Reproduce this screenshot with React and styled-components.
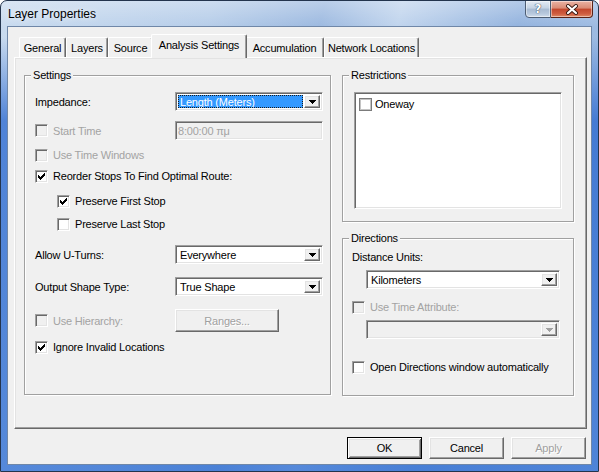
import React from "react";
import styled, { createGlobalStyle, css } from "styled-components";

const GlobalStyle = createGlobalStyle`
  html, body { margin: 0; padding: 0; background: #fff; }
  body {
    font-family: "Liberation Sans", Arial, sans-serif;
    font-size: 11px;
    letter-spacing: -0.2px;
    color: #000;
  }
  * { box-sizing: border-box; }
`;

// classic 3D borders
const sunken = css`
  border: 1px solid;
  border-color: #a0a0a0 #fff #fff #a0a0a0;
  box-shadow: inset 1px 1px 0 #696969, inset -1px -1px 0 #e3e3e3;
`;
const raised = css`
  border: 1px solid;
  border-color: #fff #696969 #696969 #fff;
  box-shadow: inset -1px -1px 0 #a0a0a0, inset 1px 1px 0 #e3e3e3;
`;

const Window = styled.div`
  width: 599px;
  height: 472px;
  display: flex;
  flex-direction: column;
  border: 1px solid #23344d;
  border-radius: 7px 7px 0 0;
  overflow: hidden;
  background:
    linear-gradient(180deg, rgba(255,255,255,0.3) 0, rgba(255,255,255,0) 26px, rgba(30,90,200,0) 36px, rgba(30,95,205,0.7) 120px, rgba(40,105,210,0.7) 100%),
    linear-gradient(103deg, #c9dbef 0%, #b6cde9 30%, #9cb9e0 46%, #c0d4ed 57%, #93b3de 74%, #aac4e6 100%);
`;

const TitleBar = styled.div`
  height: 26px;
  display: flex;
  align-items: flex-start;
  padding: 0 5px 0 7px;
`;

const Title = styled.div`
  flex: 1;
  font-size: 12px;
  letter-spacing: 0;
  line-height: 26px;
  color: #000;
  text-shadow: 0 0 6px rgba(255,255,255,0.9);
`;

const CaptionButton = styled.div`
  width: ${p => p.$w}px;
  height: 18px;
  margin-top: -1px;
  display: flex;
  align-items: center;
  justify-content: center;
  border: 1px solid ${p => (p.$close ? "#5a2216" : "#4d5d73")};
  border-left: ${p => (p.$close ? "none" : undefined)};
  border-radius: ${p => (p.$close ? "0 0 4px 0" : "0 0 0 4px")};
  background: ${p =>
    p.$close
      ? "linear-gradient(180deg, #eab3a5 0%, #d98a74 45%, #c2462c 50%, #cf5d40 80%, #e08a66 100%)"
      : "linear-gradient(180deg, #e4ebf4 0%, #c4d2e3 45%, #a7bad2 50%, #b8c9de 80%, #d2deec 100%)"};
  box-shadow: inset 0 0 0 1px rgba(255,255,255,0.45);
  color: #fff;
  font-family: "DejaVu Sans", sans-serif;
  font-weight: bold;
  font-size: 12px;
  letter-spacing: 0;
  text-shadow: 0 0 1px #2b3a52, 0 0 1px #2b3a52;
`;

const Client = styled.div`
  flex: 1;
  margin: 0 7px 7px;
  background: #f0f0f0;
  display: flex;
  flex-direction: column;
  padding: 7px 4px 5px 6px;
  box-shadow: 0 0 0 1px #6f87a8;
`;

const TabStrip = styled.div`
  height: 23px;
  display: flex;
  align-items: flex-end;
  padding-left: 5px;
  position: relative;
  z-index: 1;
`;

const Tab = styled.div`
  width: ${p => (p.$active ? p.$w + 4 : p.$w)}px;
  height: ${p => (p.$active ? 24 : 20)}px;
  margin: ${p => (p.$active ? "0 -2px -1px -2px" : "0")};
  padding-bottom: ${p => (p.$active ? 4 : 0)}px;
  position: relative;
  z-index: ${p => (p.$active ? 2 : 1)};
  display: flex;
  align-items: center;
  justify-content: center;
  background: #f0f0f0;
  border-top: 1px solid #fff;
  border-left: 1px solid #fff;
  border-right: 1px solid #696969;
  border-radius: 2px 2px 0 0;
  box-shadow: inset -1px 0 0 #a0a0a0;
  white-space: nowrap;
`;

const TabPage = styled.div`
  height: 372px;
  ${raised};
  display: flex;
  align-items: flex-start;
  gap: 11px;
  padding: 17px 12px 0 9px;
`;

const Column = styled.div`
  display: flex;
  flex-direction: column;
  gap: 16px;
`;

const GroupBox = styled.div`
  position: relative;
  width: ${p => p.$w}px;
  height: ${p => p.$h}px;
  border: 1px solid #a0a0a0;
  box-shadow: inset 1px 1px 0 #fff, 1px 1px 0 #fff;
  padding: ${p => p.$pad};
  display: flex;
  flex-direction: column;
`;

const GroupTitle = styled.span`
  position: absolute;
  top: -7px;
  left: 6px;
  padding: 0 2px;
  line-height: 13px;
  background: #f0f0f0;
`;

const Row = styled.div`
  height: ${p => p.$h || 16}px;
  margin-top: ${p => p.$mt || 0}px;
  margin-left: ${p => p.$indent || 0}px;
  display: flex;
  align-items: center;
  flex-shrink: 0;
`;

const Label = styled.div`
  width: ${p => (p.$w ? `${p.$w}px` : "auto")};
  display: flex;
  align-items: center;
  gap: ${p => p.$gap ?? 5}px;
  color: ${p => (p.$disabled ? "#a3a3a3" : "#000")};
  white-space: nowrap;
`;

const Box = styled.span`
  width: 13px;
  height: 13px;
  flex-shrink: 0;
  display: inline-flex;
  align-items: center;
  justify-content: center;
  background: ${p => (p.$disabled ? "#f0f0f0" : "#fff")};
  color: #000;
  ${p =>
    p.$flat
      ? css`
          border: 1px solid #7b7b7b;
          box-shadow: inset 0 0 0 1px #c4c4c4;
        `
      : sunken};
`;

const CheckMark = () => (
  <svg width="7" height="7" viewBox="0 0 7 7" shapeRendering="crispEdges">
    {[2, 3, 4, 3, 2, 1, 0].map((t, i) => (
      <rect key={i} x={i} y={t} width="1" height="3" fill="currentColor" />
    ))}
  </svg>
);

const CheckBox = ({ checked, disabled, flat }) => (
  <Box $disabled={disabled} $flat={flat}>
    {checked && <CheckMark />}
  </Box>
);

const Combo = styled.div`
  width: ${p => p.$w}px;
  height: 19px;
  ${sunken};
  background: ${p => (p.$disabled ? "#f0f0f0" : "#fff")};
  display: flex;
  padding: 2px;
`;

const ComboText = styled.div`
  flex: 1;
  display: flex;
  align-items: center;
  padding-left: 2px;
  margin-right: 1px;
  white-space: nowrap;
  ${p =>
    p.$selected &&
    css`
      background: #3399ff;
      color: #fff;
      outline: 1px dotted #1c1c1c;
      outline-offset: -1px;
    `}
`;

const DropButton = styled.div`
  width: 16px;
  ${raised};
  background: #f0f0f0;
  display: flex;
  align-items: center;
  justify-content: center;
  color: ${p => (p.$disabled ? "#a0a0a0" : "#000")};
`;

const Arrow = () => (
  <svg width="7" height="4" viewBox="0 0 7 4" shapeRendering="crispEdges">
    <rect x="0" y="0" width="7" height="1" fill="currentColor" />
    <rect x="1" y="1" width="5" height="1" fill="currentColor" />
    <rect x="2" y="2" width="3" height="1" fill="currentColor" />
    <rect x="3" y="3" width="1" height="1" fill="currentColor" />
  </svg>
);

const ComboBox = ({ w, value, selected, disabled }) => (
  <Combo $w={w} $disabled={disabled}>
    <ComboText $selected={selected}>{value}</ComboText>
    <DropButton $disabled={disabled}>
      <Arrow />
    </DropButton>
  </Combo>
);

const TextBox = styled.div`
  width: ${p => p.$w}px;
  height: 19px;
  ${sunken};
  background: #f0f0f0;
  color: #a3a3a3;
  display: flex;
  align-items: center;
  padding-left: 2px;
`;

const PushButton = styled.div`
  width: ${p => p.$w || 75}px;
  height: ${p => p.$h || 22}px;
  display: flex;
  align-items: center;
  justify-content: center;
  background: #f0f0f0;
  color: ${p => (p.$disabled ? "#a0a0a0" : "#000")};
  text-shadow: ${p => (p.$disabled ? "1px 1px 0 #fff" : "none")};
  ${p =>
    p.$default
      ? css`
          border: 1px solid #000;
          box-shadow: inset 1px 1px 0 #fff, inset -1px -1px 0 #696969,
            inset 2px 2px 0 #e3e3e3, inset -2px -2px 0 #a0a0a0;
        `
      : raised};
`;

const ListBox = styled.div`
  width: 208px;
  height: 117px;
  ${sunken};
  background: #fff;
  padding: 3px 4px;
`;

const ListItem = styled.div`
  height: 16px;
  display: flex;
  align-items: center;
  gap: 3px;
`;

const ButtonRow = styled.div`
  margin-top: 8px;
  height: 22px;
  display: flex;
  justify-content: flex-end;
  gap: 7px;
  padding-right: 1px;
`;

const tabs = [
  ["General", 47],
  ["Layers", 42],
  ["Source", 45],
  ["Analysis Settings", 92],
  ["Accumulation", 79],
  ["Network Locations", 95],
];

const CloseGlyph = () => (
  <svg width="14" height="11" viewBox="0 0 14 11">
    <path d="M3 2 L11 9 M11 2 L3 9" stroke="#3b1b14" strokeWidth="4" strokeLinecap="round" />
    <path d="M3 2 L11 9 M11 2 L3 9" stroke="#fff" strokeWidth="2.2" strokeLinecap="round" />
  </svg>
);

export default function App() {
  return (
    <>
      <GlobalStyle />
      <Window>
        <TitleBar>
          <Title>Layer Properties</Title>
          <CaptionButton $w={26}>?</CaptionButton>
          <CaptionButton $w={42} $close>
            <CloseGlyph />
          </CaptionButton>
        </TitleBar>
        <Client>
          <TabStrip>
            {tabs.map(([name, w]) => (
              <Tab key={name} $w={w} $active={name === "Analysis Settings"}>
                {name}
              </Tab>
            ))}
          </TabStrip>
          <TabPage>
            <GroupBox $w={307} $h={320} $pad="16px 0 0 10px">
              <GroupTitle>Settings</GroupTitle>
              <Row $h={19}>
                <Label $w={140}>Impedance:</Label>
                <ComboBox w={148} value="Length (Meters)" selected />
              </Row>
              <Row $h={19} $mt={10}>
                <Label $w={140} $disabled>
                  <CheckBox disabled />
                  Start Time
                </Label>
                <TextBox $w={148}>8:00:00 πμ</TextBox>
              </Row>
              <Row $mt={7}>
                <Label $disabled>
                  <CheckBox disabled />
                  Use Time Windows
                </Label>
              </Row>
              <Row $mt={5}>
                <Label>
                  <CheckBox checked />
                  Reorder Stops To Find Optimal Route:
                </Label>
              </Row>
              <Row $mt={9} $indent={22}>
                <Label>
                  <CheckBox checked />
                  Preserve First Stop
                </Label>
              </Row>
              <Row $mt={7} $indent={22}>
                <Label>
                  <CheckBox />
                  Preserve Last Stop
                </Label>
              </Row>
              <Row $h={19} $mt={13}>
                <Label $w={140}>Allow U-Turns:</Label>
                <ComboBox w={148} value="Everywhere" />
              </Row>
              <Row $h={19} $mt={13}>
                <Label $w={140}>Output Shape Type:</Label>
                <ComboBox w={148} value="True Shape" />
              </Row>
              <Row $h={23} $mt={13}>
                <Label $w={140} $disabled>
                  <CheckBox disabled />
                  Use Hierarchy:
                </Label>
                <PushButton $w={104} $h={23} $disabled>
                  Ranges...
                </PushButton>
              </Row>
              <Row $mt={7}>
                <Label>
                  <CheckBox checked />
                  Ignore Invalid Locations
                </Label>
              </Row>
            </GroupBox>

            <Column>
              <GroupBox $w={232} $h={147} $pad="16px 0 0 11px">
                <GroupTitle>Restrictions</GroupTitle>
                <ListBox>
                  <ListItem>
                    <CheckBox flat />
                    Oneway
                  </ListItem>
                </ListBox>
              </GroupBox>
              <GroupBox $w={232} $h={158} $pad="10px 0 0 9px">
                <GroupTitle>Directions</GroupTitle>
                <Row>
                  <Label>Distance Units:</Label>
                </Row>
                <Row $h={19} $mt={5} $indent={14}>
                  <ComboBox w={194} value="Kilometers" />
                </Row>
                <Row $mt={10}>
                  <Label $disabled>
                    <CheckBox disabled />
                    Use Time Attribute:
                  </Label>
                </Row>
                <Row $h={19} $mt={5} $indent={14}>
                  <ComboBox w={194} value="" disabled />
                </Row>
                <Row $mt={20}>
                  <Label>
                    <CheckBox />
                    Open Directions window automatically
                  </Label>
                </Row>
              </GroupBox>
            </Column>
          </TabPage>
          <ButtonRow>
            <PushButton $default>OK</PushButton>
            <PushButton>Cancel</PushButton>
            <PushButton $disabled>Apply</PushButton>
          </ButtonRow>
        </Client>
      </Window>
    </>
  );
}
